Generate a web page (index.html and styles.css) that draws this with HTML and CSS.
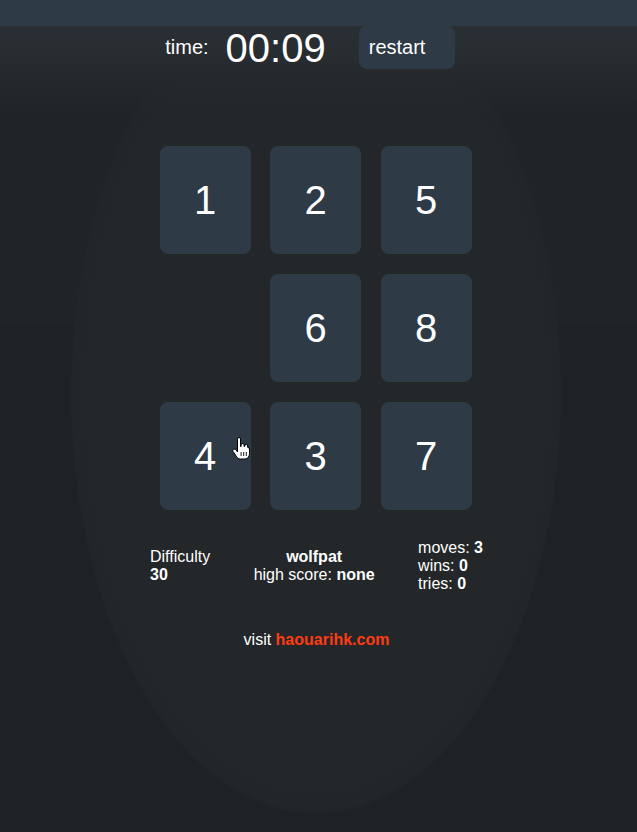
FILE: index.html
```html
<!DOCTYPE html>
<html lang="en">
<head>
<meta charset="utf-8">
<title>Puzzle</title>
<link rel="stylesheet" href="styles.css">
</head>
<body>
<div class="topbar"></div>
<div class="page">
  <header class="header">
    <span class="time-label">time:</span>
    <span class="timer">00:09</span>
    <button class="restart">restart</button>
  </header>

  <main class="board-wrap">
    <div class="board">
      <div class="tile">1</div>
      <div class="tile">2</div>
      <div class="tile">5</div>
      <div class="tile empty"></div>
      <div class="tile">6</div>
      <div class="tile">8</div>
      <div class="tile">4</div>
      <div class="tile">3</div>
      <div class="tile">7</div>
    </div>
  </main>

  <section class="stats">
    <div class="col col-left">
      <div>Difficulty</div>
      <div><b>30</b></div>
    </div>
    <div class="col col-center">
      <div><b>wolfpat</b></div>
      <div>high score: <b>none</b></div>
    </div>
    <div class="col col-right">
      <div>moves: <b>3</b></div>
      <div>wins: <b>0</b></div>
      <div>tries: <b>0</b></div>
    </div>
  </section>

  <p class="visit">visit <a class="link" href="#">haouarihk.com</a></p>
</div>

<svg class="cursor" width="18" height="23" viewBox="0 0 18 23" aria-hidden="true">
  <path d="M5.5 2a1.5 1.5 0 0 1 3 0V9.5h.6V8a1.5 1.5 0 0 1 3 0v1.5h.6V9a1.5 1.5 0 0 1 3 0v1.5h.2a1.5 1.5 0 0 1 1.6 1.5V16.5c0 2.8-1.8 5.5-4.6 5.5H8.3c-1.6 0-2.7-.9-3.6-2.2L1.2 14.8c-.6-.9-.4-1.9.4-2.4.8-.5 1.8-.3 2.4.5l1.5 2V2z" fill="#fff" stroke="#000" stroke-width="1" stroke-linejoin="round"/>
  <path d="M9.1 15v4M11.7 15v4M14.3 15v4" stroke="#000" stroke-width="0.9"/>
</svg>
</body>
</html>
```

FILE: styles.css
```css
html, body {
  margin: 0;
  padding: 0;
}

body {
  min-height: 832px;
  position: relative;
  color: #ffffff;
  font-family: "Liberation Sans", Arial, sans-serif;
  font-size: 16px;
  background-color: #212426;
  background-image:
    linear-gradient(to bottom, #2a2f35 0px, #292e33 44px, #25292c 80px, rgba(33,36,38,0) 110px),
    radial-gradient(ellipse 246px 420px at 316px 395px, #232729 0%, #232729 90%, #222628 99%, rgba(31,33,35,0) 100%),
    linear-gradient(to bottom, #212426 0px, #212426 325px, #1f2224 326px, #1f2224 100%);
  overflow: hidden;
}

.topbar {
  height: 26px;
  background: #2e3a46;
}

.page {
  padding-right: 4px;
}

.header {
  display: flex;
  justify-content: center;
  align-items: flex-start;
  padding-right: 13px;
  height: 43px;
}

.time-label {
  font-size: 20px;
  line-height: 23px;
  margin-top: 10px;
}

.timer {
  font-size: 40px;
  line-height: 44px;
  margin-left: 17px;
}

.restart {
  margin-left: 33px;
  width: 96px;
  height: 43px;
  box-sizing: border-box;
  padding: 0 0 0 10px;
  border: none;
  border-radius: 8px;
  background: #2e3a46;
  color: #ffffff;
  font-family: "Liberation Sans", Arial, sans-serif;
  font-size: 20px;
  line-height: 23px;
  text-align: left;
  display: flex;
  align-items: center;
}

.board-wrap {
  display: flex;
  justify-content: center;
  margin-top: 77px;
  padding-right: 2px;
}

.board {
  display: grid;
  grid-template-columns: repeat(3, 91px);
  grid-auto-rows: 108px;
  column-gap: 19.5px;
  row-gap: 20px;
}

.tile {
  background: #2e3a46;
  border-radius: 8px;
  display: flex;
  align-items: center;
  justify-content: center;
  font-size: 40px;
  color: #ffffff;
}

.tile.empty {
  background: transparent;
}

.stats {
  width: 333px;
  margin: 29px auto 0;
  display: flex;
  justify-content: space-between;
  align-items: center;
  line-height: 18px;
}

.col-left {
  text-align: left;
}

.col-center {
  text-align: center;
}

.col-right {
  text-align: left;
}

.visit {
  margin: 38px 0 0;
  text-align: center;
  line-height: 18px;
}

.link {
  color: #ff3b12;
  font-weight: bold;
  text-decoration: none;
}

.cursor {
  position: absolute;
  left: 232px;
  top: 437px;
}
```
